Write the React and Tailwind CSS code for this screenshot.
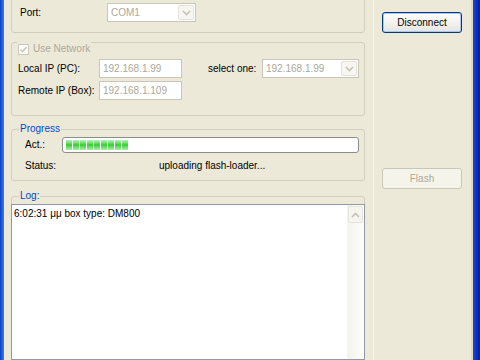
import React from 'react'

// Small chevron used on the (disabled) combo boxes
function Chevron() {
  return (
    <svg width="9" height="6" viewBox="0 0 9 6">
      <path d="M1 1 L4.5 4.5 L8 1" fill="none" stroke="#c4c2b6" strokeWidth="1.6" />
    </svg>
  )
}

function Combo({ value, width }) {
  return (
    <div className={`${width} h-[19px] flex border border-[#c9c7ba] bg-white`}>
      <div className="flex-1 pl-[3px] flex items-center text-[#aca899]">{value}</div>
      <div className="w-[16px] m-[1px] flex items-center justify-center rounded-[2px] bg-[#f7f6f1] border border-[#e3e1d8]">
        <Chevron />
      </div>
    </div>
  )
}

function TextBox({ value }) {
  return (
    <div className="w-[83px] h-[19px] border border-[#c9c7ba] bg-white pl-[3px] flex items-center text-[#aca899]">
      {value}
    </div>
  )
}

export default function App() {
  const segments = [0, 1, 2, 3, 4, 5, 6, 7, 8]

  return (
    <div className="w-[480px] h-[360px] overflow-hidden flex font-['Liberation_Sans',Arial,sans-serif] text-[10px] leading-[12px] text-black">
      {/* left window frame */}
      <div className="w-[4px] h-full bg-linear-to-r from-[#0a3cc4] to-[#3b7ff0]" />

      <div className="flex-1 flex bg-[#ece9d8]">
        {/* left column with group boxes */}
        <div className="w-[369px] pl-[7px] flex flex-col">
          {/* Connection group */}
          <div className="w-[354px] h-[53px] mt-[-20px] border border-[#d0d0bf] rounded-[3px] pt-[22px] pl-[8px]">
            <div className="flex items-center h-[19px]">
              <div className="w-[87px]">Port:</div>
              <Combo value="COM1" width="w-[89px]" />
            </div>
          </div>

          {/* Network group */}
          <div className="relative w-[354px] h-[74px] mt-[9px] border border-[#d0d0bf] rounded-[3px] pt-[16px] pl-[6px]">
            <div className="absolute top-[-1px] left-[5px] h-[14px] px-[1px] flex items-center gap-[4px] bg-[#ece9d8] text-[#aca899]">
              <div className="w-[11px] h-[11px] border border-[#cac8bb] bg-white flex items-center justify-center">
                <svg width="7" height="7" viewBox="0 0 7 7">
                  <path d="M0.5 3.5 L2.5 5.5 L6.5 1" fill="none" stroke="#c9c7ba" strokeWidth="1.6" />
                </svg>
              </div>
              <span>Use Network</span>
            </div>
            <div className="flex items-center h-[19px]">
              <div className="w-[81px]">Local IP (PC):</div>
              <TextBox value="192.168.1.99" />
              <div className="ml-[26px] w-[54px]">select one:</div>
              <Combo value="192.168.1.99" width="w-[97px]" />
            </div>
            <div className="flex items-center h-[19px] mt-[3px]">
              <div className="w-[81px]">Remote IP (Box):</div>
              <TextBox value="192.168.1.109" />
            </div>
          </div>

          {/* Progress group */}
          <div className="relative w-[354px] h-[52px] mt-[13px] border border-[#d0d0bf] rounded-[3px] pt-[7px] pl-[13px]">
            <div className="absolute top-[-7px] left-[7px] px-[1px] bg-[#ece9d8] text-[#0046d5]">Progress</div>
            <div className="flex items-center h-[16px]">
              <div className="w-[37px]">Act.:</div>
              <div className="w-[297px] h-[16px] border border-[#8c8c8c] rounded-[3px] bg-white pl-[3px] pt-[2px] flex gap-[1px]">
                {segments.map(i => (
                  <div key={i} className="w-[6px] h-[10px] bg-linear-to-b from-[#b6f3b6] via-[#2ccf2c] to-[#a9eea9]" />
                ))}
              </div>
            </div>
            <div className="flex items-center h-[12px] mt-[7px]">
              <div className="w-[134px]">Status:</div>
              <div>uploading flash-loader...</div>
            </div>
          </div>

          {/* Log group */}
          <div className="relative w-[354px] flex-1 mt-[15px] border border-[#d0d0bf] rounded-t-[3px] pt-[7px] flex flex-col">
            <div className="absolute top-[-7px] left-[7px] px-[1px] bg-[#ece9d8] text-[#0046d5]">Log:</div>
            <div className="flex-1 -mx-[1px] -mb-[1px] border border-[#8f9aa5] bg-white flex">
              <div className="flex-1 pl-[2px] pt-[3px]">6:02:31 μμ box type: DM800</div>
              <div className="w-[17px] bg-linear-to-r from-[#f3f2ec] to-[#fdfdfb] flex flex-col">
                <div className="h-[17px] m-[1px] rounded-[2px] border border-[#e6e5dd] bg-[#f5f4ef] flex items-center justify-center">
                  <svg width="9" height="6" viewBox="0 0 9 6">
                    <path d="M1 5 L4.5 1.5 L8 5" fill="none" stroke="#c4c2b6" strokeWidth="1.6" />
                  </svg>
                </div>
              </div>
            </div>
          </div>
        </div>

        {/* right column with buttons */}
        <div className="flex-1 border-l border-[#f7f5ee] border-r-[2px] border-r-[#dcd8c8] pl-[8px] pt-[12px] flex flex-col">
          <div className="w-[80px] h-[21px] border border-[#003c74] rounded-[3px] bg-linear-to-b from-white to-[#e7e5dd] shadow-[inset_0_0_0_1px_#a8c6f7] flex items-center justify-center">
            Disconnect
          </div>
          <div className="w-[80px] h-[21px] mt-[135px] border border-[#c9c7ba] rounded-[3px] bg-[#f5f4ea] text-[#aca899] flex items-center justify-center">
            Flash
          </div>
        </div>
      </div>

      {/* right window frame */}
      <div className="w-[7px] h-full bg-linear-to-r from-[#1c46d8] to-[#001c9e]" />
    </div>
  )
}
